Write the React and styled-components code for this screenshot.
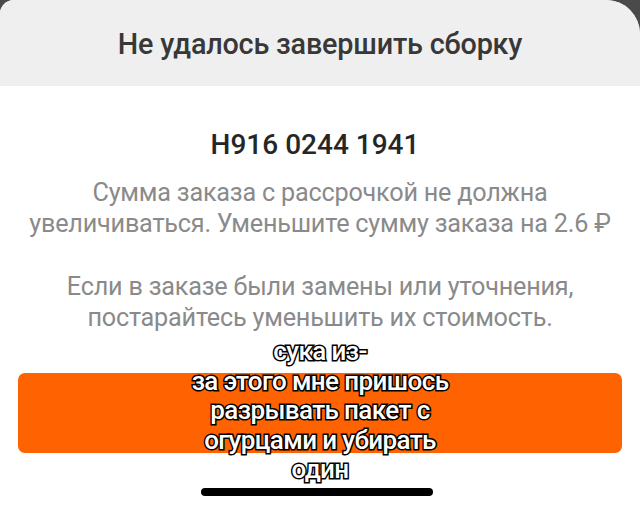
import React from "react";
import styled, { createGlobalStyle } from "styled-components";

const GlobalStyle = createGlobalStyle`
  html, body {
    margin: 0;
    padding: 0;
    background: #4a4a4a;
  }
  * {
    box-sizing: border-box;
  }
`;

const Screen = styled.div`
  position: relative;
  width: 640px;
  height: 508px;
  overflow: hidden;
  background: #4a4a4a;
  font-family: Roboto, "Noto Sans", sans-serif;
`;

const Sheet = styled.div`
  display: flex;
  flex-direction: column;
  height: 100%;
  background: #ffffff;
  border-top-left-radius: 14px;
  border-top-right-radius: 34px;
  overflow: hidden;
`;

const Header = styled.div`
  height: 86px;
  flex: none;
  display: flex;
  align-items: center;
  justify-content: center;
  background: #efefef;
  padding-top: 2px;
`;

const Title = styled.h1`
  margin: 0;
  font-size: 28.8px;
  font-weight: 500;
  color: #383838;
  letter-spacing: -0.2px;
`;

const Body = styled.div`
  display: flex;
  flex-direction: column;
  align-items: center;
  padding: 44px 18px 0;
`;

const OrderNumber = styled.div`
  font-size: 28px;
  font-weight: 500;
  color: #262626;
  line-height: 30px;
  margin-right: 10px;
`;

const Note = styled.p`
  margin: ${(p) => p.$top}px 0 0;
  font-size: 25.2px;
  font-weight: 400;
  line-height: 31px;
  letter-spacing: -0.2px;
  color: #8a8a8a;
  text-align: center;
  white-space: nowrap;
`;

const ActionButton = styled.div`
  margin-top: 40px;
  width: 100%;
  height: 80px;
  border-radius: 7px;
  background: #ff6200;
`;

const HomeBar = styled.div`
  position: absolute;
  left: 201px;
  bottom: 12px;
  width: 232px;
  height: 8px;
  border-radius: 4px;
  background: #000000;
`;

const Caption = styled.div`
  position: absolute;
  left: 0;
  right: 0;
  top: 337px;
  text-align: center;
  font-family: Roboto, "Noto Sans", sans-serif;
  font-size: 26px;
  font-weight: 500;
  line-height: 29.5px;
  letter-spacing: -0.6px;
  color: #ffffff;
  -webkit-text-stroke: 3px #000000;
  paint-order: stroke fill;
`;

export default function App() {
  return (
    <>
      <GlobalStyle />
      <Screen>
        <Sheet>
          <Header>
            <Title>Не удалось завершить сборку</Title>
          </Header>
          <Body>
            <OrderNumber>Н916 0244 1941</OrderNumber>
            <Note $top={17}>
              Сумма заказа с рассрочкой не должна
              <br />
              увеличиваться. Уменьшите сумму заказа на 2.6 ₽
            </Note>
            <Note $top={32}>
              Если в заказе были замены или уточнения,
              <br />
              постарайтесь уменьшить их стоимость.
            </Note>
            <ActionButton />
          </Body>
        </Sheet>
        <Caption>
          сука из-
          <br />
          за этого мне пришось
          <br />
          разрывать пакет с
          <br />
          огурцами и убирать
          <br />
          один
        </Caption>
        <HomeBar />
      </Screen>
    </>
  );
}
